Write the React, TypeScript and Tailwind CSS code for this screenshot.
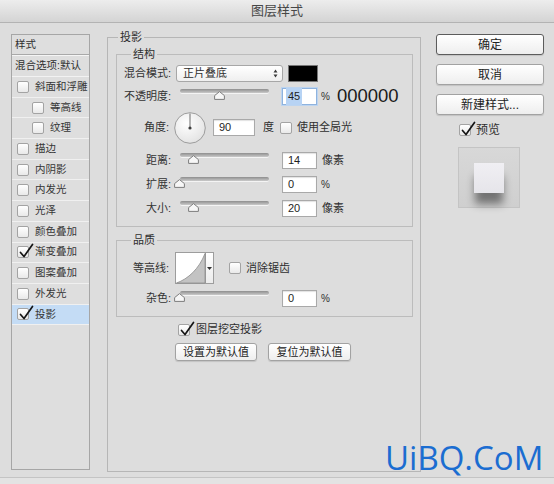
import React from "react";

type Item = { label: string; indent?: boolean; checked?: boolean; selected?: boolean };

const effects: Item[] = [
  { label: "斜面和浮雕" },
  { label: "等高线", indent: true },
  { label: "纹理", indent: true },
  { label: "描边" },
  { label: "内阴影" },
  { label: "内发光" },
  { label: "光泽" },
  { label: "颜色叠加" },
  { label: "渐变叠加", checked: true },
  { label: "图案叠加" },
  { label: "外发光" },
  { label: "投影", checked: true, selected: true },
];

function Check({ checked = false }: { checked?: boolean }) {
  return (
    <span className="relative inline-block w-[12px] h-[12px] shrink-0 rounded-[2px] border border-[#a3a3a3] bg-gradient-to-b from-white to-[#e9e9e9]">
      {checked && (
        <svg className="absolute left-[1px] top-[-4px] overflow-visible" width="14" height="15" viewBox="0 0 14 15">
          <path d="M1.5 9.5 L5 13.5 L13.5 1.5" fill="none" stroke="#151515" strokeWidth="1.7" strokeLinecap="round" strokeLinejoin="round" />
        </svg>
      )}
    </span>
  );
}

function Field({ children, w = "w-[35px]" }: { children: React.ReactNode; w?: string }) {
  return (
    <div className={`${w} h-[17px] shrink-0 flex items-center pl-[5px] bg-white border border-[#a9a9a9] shadow-[inset_0_1px_1px_rgba(0,0,0,0.12)] text-[11px] text-[#1e1e1e]`}>
      {children}
    </div>
  );
}

// slider track with the little house-shaped thumb below it
function Slider({ at }: { at: number }) {
  return (
    <div className="relative ml-[9px] w-[89px] h-[17px] shrink-0">
      <div className="mt-[1px] h-[4px] rounded-full bg-gradient-to-b from-[#8e8e8e] to-[#cacaca] shadow-[0_1px_0_#f4f4f4]" />
      <svg className="absolute top-[3px]" style={{ left: at }} width="11" height="9" viewBox="0 0 11 9">
        <path d="M5.5 0.6 L10.4 4.6 L10.4 8.4 L0.6 8.4 L0.6 4.6 Z" fill="#f7f7f7" stroke="#7c7c7c" strokeWidth="1" />
      </svg>
    </div>
  );
}

function Label({ children, w = "w-[54px]" }: { children: React.ReactNode; w?: string }) {
  return <div className={`${w} shrink-0 text-right text-[11px] text-[#333] leading-none whitespace-nowrap`}>{children}</div>;
}

function Btn({ children, strong = false, className = "" }: { children: React.ReactNode; strong?: boolean; className?: string }) {
  return (
    <div
      className={`flex items-center justify-center whitespace-nowrap rounded-[3px] bg-gradient-to-b from-white to-[#eeeeee] text-[#222] shadow-[0_1px_1px_rgba(0,0,0,0.12)] ${
        strong ? "border-[1.5px] border-[#5c5c5c]" : "border border-[#a2a2a2]"
      } ${className}`}
    >
      {children}
    </div>
  );
}

export default function App() {
  return (
    <div className="relative w-[554px] h-[484px] overflow-hidden bg-[#dddddd] flex flex-col font-['Liberation_Sans','Noto_Sans_CJK_SC',sans-serif] text-[#2f2f2f]">
      {/* title bar */}
      <div className="h-[23px] shrink-0 flex items-center justify-center border-b border-[#b3b3b3] bg-gradient-to-b from-[#ededed] to-[#d4d4d4] text-[13px] text-[#474747]">
        图层样式
      </div>

      <div className="h-[454px] flex items-start">
        {/* effect list */}
        <div className="ml-[11px] mt-[11px] w-[79px] h-[436px] shrink-0 border border-[#a6a6a6] bg-[#dedede] text-[10.5px] whitespace-nowrap">
          <div className="h-[20px] flex items-center pl-[3px] border-b border-[#a9a9a9] shadow-[0_1px_0_#f5f5f5]">样式</div>
          <div className="h-[22px] flex items-center pl-[3px] border-b border-[#f2f2f2]">混合选项:默认</div>
          {effects.map((it) => (
            <div
              key={it.label}
              className={`h-[20.7px] flex items-center border-b border-[#f0f0f0] ${it.indent ? "pl-[20px]" : "pl-[5px]"} ${
                it.selected ? "bg-[#c4dcf5]" : ""
              }`}
            >
              <Check checked={it.checked} />
              <span className="ml-[6px] text-[#363636]">{it.label}</span>
            </div>
          ))}
        </div>

        {/* drop shadow settings */}
        <fieldset className="ml-[17px] mt-[7px] w-[314px] h-[442px] shrink-0 border border-[#b6b6b6] pl-[8px] pr-[7px]">
          <legend className="ml-[2px] px-[2px] text-[11px] leading-[14px]">投影</legend>

          <fieldset className="mt-[3px] border border-[#bcbcbc] pb-[9px]">
            <legend className="ml-[14px] px-[2px] text-[11px] leading-[14px]">结构</legend>

            <div className="mt-[4px] h-[17px] flex items-center">
              <Label>混合模式:</Label>
              <div className="ml-[5px] w-[107px] h-[17px] shrink-0 flex items-center justify-between pl-[6px] pr-[4px] rounded-[3px] border border-[#a7a7a7] bg-gradient-to-b from-white to-[#efefef] text-[11px]">
                <span>正片叠底</span>
                <svg width="5" height="9" viewBox="0 0 5 9">
                  <path d="M2.5 0.5 L4.5 3.5 L0.5 3.5 Z M2.5 8.5 L4.5 5.5 L0.5 5.5 Z" fill="#3a3a3a" />
                </svg>
              </div>
              <div className="ml-[5px] w-[30px] h-[17px] shrink-0 bg-black border border-[#777]" />
            </div>

            <div className="mt-[6px] h-[17px] flex items-center">
              <Label>不透明度:</Label>
              <Slider at={33.5} />
              <div className="ml-[13px] w-[35px] h-[17px] shrink-0 flex items-center pl-[3px] bg-white border border-[#8fb3de] shadow-[0_0_0_1px_#bcd4f0] text-[11px] text-[#1e1e1e]">
                <span className="bg-[#b7d3f4] px-[2px]">45</span>
              </div>
              <span className="ml-[4px] text-[10px]">%</span>
              <span className="ml-[7px] text-[18.5px] leading-none text-[#1a1a1a]">000000</span>
            </div>

            <div className="mt-[6px] h-[33px] flex items-center">
              <Label w="w-[52px]">角度:</Label>
              <svg className="ml-[5px] shrink-0" width="32" height="32" viewBox="0 0 32 32">
                <defs>
                  <radialGradient id="dial" cx="40%" cy="35%" r="70%">
                    <stop offset="0" stopColor="#ffffff" />
                    <stop offset="1" stopColor="#e2e2e2" />
                  </radialGradient>
                </defs>
                <circle cx="16" cy="16" r="15.3" fill="url(#dial)" stroke="#9c9c9c" strokeWidth="1" />
                <line x1="16" y1="16" x2="16" y2="1.5" stroke="#6e6e6e" strokeWidth="1" />
                <circle cx="16" cy="16" r="1.6" fill="#3d3d3d" />
              </svg>
              <div className="ml-[7px]">
                <Field w="w-[42px]">90</Field>
              </div>
              <span className="ml-[8px] text-[11px]">度</span>
              <span className="ml-[6px] flex items-center">
                <Check />
              </span>
              <span className="ml-[5px] text-[11px]">使用全局光</span>
            </div>

            <div className="mt-[8px] h-[17px] flex items-center">
              <Label>距离:</Label>
              <Slider at={7.5} />
              <div className="ml-[13px]">
                <Field>14</Field>
              </div>
              <span className="ml-[5px] text-[11px]">像素</span>
            </div>

            <div className="mt-[7px] h-[17px] flex items-center">
              <Label>扩展:</Label>
              <Slider at={-6.5} />
              <div className="ml-[13px]">
                <Field>0</Field>
              </div>
              <span className="ml-[4px] text-[10px]">%</span>
            </div>

            <div className="mt-[7px] h-[17px] flex items-center">
              <Label>大小:</Label>
              <Slider at={7.5} />
              <div className="ml-[13px]">
                <Field>20</Field>
              </div>
              <span className="ml-[5px] text-[11px]">像素</span>
            </div>
          </fieldset>

          <fieldset className="mt-[6px] border border-[#bcbcbc] pb-[9px]">
            <legend className="ml-[14px] px-[2px] text-[11px] leading-[14px]">品质</legend>

            <div className="mt-[5px] h-[32px] flex items-center">
              <Label w="w-[52px]">等高线:</Label>
              <svg className="ml-[6px] shrink-0" width="31" height="32" viewBox="0 0 31 32">
                <rect x="0.5" y="0.5" width="30" height="31" fill="#ffffff" stroke="#9d9d9d" />
                <path d="M1.5 31 C 13 27, 24 17, 30 1.5 L30 31 Z" fill="#c3c3c3" stroke="#8d8d8d" strokeWidth="0.8" />
              </svg>
              <div className="w-[8px] h-[32px] shrink-0 flex items-center justify-center border border-l-0 border-[#9d9d9d] bg-gradient-to-b from-white to-[#ececec]">
                <svg width="5" height="3" viewBox="0 0 5 3">
                  <path d="M0 0 L5 0 L2.5 3 Z" fill="#333" />
                </svg>
              </div>
              <span className="ml-[15px] flex items-center">
                <Check />
              </span>
              <span className="ml-[5px] text-[11px]">消除锯齿</span>
            </div>

            <div className="mt-[6px] h-[17px] flex items-center">
              <Label>杂色:</Label>
              <Slider at={-6.5} />
              <div className="ml-[13px]">
                <Field>0</Field>
              </div>
              <span className="ml-[4px] text-[10px]">%</span>
            </div>
          </fieldset>

          <div className="mt-[6px] h-[13px] flex items-center pl-[62px]">
            <Check checked />
            <span className="ml-[6px] text-[11px]">图层挖空投影</span>
          </div>

          <div className="mt-[7px] flex pl-[59px] gap-[11px]">
            <Btn className="w-[82px] h-[18px] text-[11px]">设置为默认值</Btn>
            <Btn className="w-[83px] h-[18px] text-[11px]">复位为默认值</Btn>
          </div>
        </fieldset>

        {/* buttons and preview */}
        <div className="ml-[15px] mt-[11px] w-[108px] flex flex-col">
          <Btn strong className="h-[21px] text-[12px]">确定</Btn>
          <Btn className="mt-[9px] h-[21px] text-[12px]">取消</Btn>
          <Btn className="mt-[9px] h-[21px] text-[12px]">新建样式...</Btn>
          <div className="mt-[8px] ml-[23px] h-[13px] flex items-center">
            <Check checked />
            <span className="ml-[5px] text-[12px]">预览</span>
          </div>
          <div className="mt-[11px] ml-[22px] w-[62px] h-[61px] border border-[#c4c4c4] bg-gradient-to-b from-[#d8d8d8] to-[#cfcfcf] flex justify-center pt-[15px]">
            <div className="w-[30px] h-[30px] bg-gradient-to-b from-[#f0eff3] to-[#e6e5ea] shadow-[0_12px_9px_-1px_rgba(0,0,0,0.45)]" />
          </div>
        </div>
      </div>

      <div className="flex-1 border-t border-[#c4c4c4] bg-[#e3e3e3]" />

      {/* site watermark */}
      <div className="absolute left-[385px] top-[441px] text-[33px] leading-none font-['Open_Sans',sans-serif] text-[#1b6dd1]">
        UiBQ.CoM
      </div>
    </div>
  );
}
